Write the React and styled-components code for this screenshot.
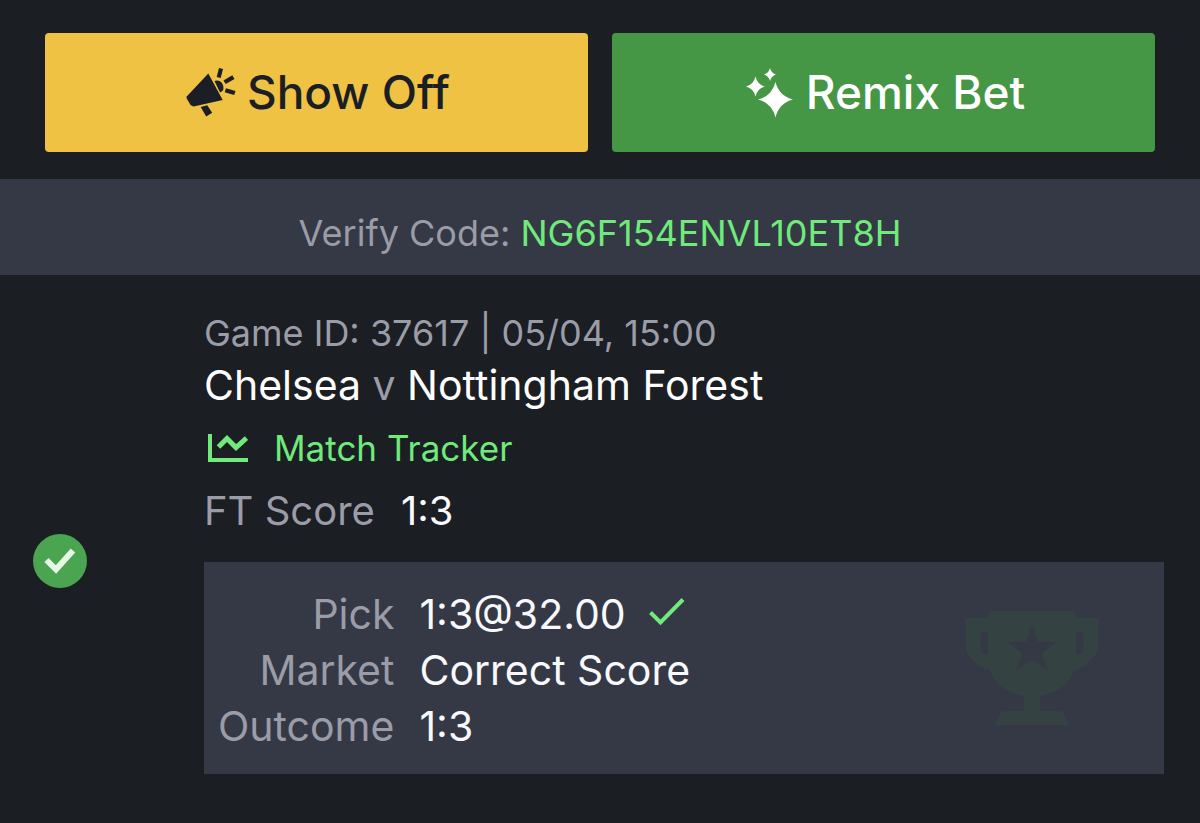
import * as React from 'react';
import styled, { createGlobalStyle } from 'styled-components';

const match = {
    gameId: '37617',
    date: '05/04, 15:00',
    home: 'Chelsea',
    away: 'Nottingham Forest',
    score: '1:3',
};

const rows = [
    { label: 'Pick', value: '1:3@32.00', won: true },
    { label: 'Market', value: 'Correct Score' },
    { label: 'Outcome', value: '1:3' },
];

export default function App() {
    return (
        <>
            <GlobalStyle />
            <main>
                <Actions>
                    <Button type="button" $bg="#efc243" $color="#1b1e24">
                        <MegaphoneIcon />
                        Show Off
                    </Button>
                    <Button type="button" $bg="#459645" $color="#fff">
                        <SparkleIcon />
                        Remix Bet
                    </Button>
                </Actions>
                <VerifyBar>
                    Verify Code: <Code>NG6F154ENVL10ET8H</Code>
                </VerifyBar>
                <Bet>
                    <Status>
                        <WonIcon />
                    </Status>
                    <Details>
                        <GameInfo>Game ID: {match.gameId} | {match.date}</GameInfo>
                        <Teams>
                            {match.home} <Muted>v</Muted> {match.away}
                        </Teams>
                        <Tracker href="#tracker">
                            <ChartIcon />
                            Match Tracker
                        </Tracker>
                        <Score>
                            <Muted>FT Score</Muted>
                            <span>{match.score}</span>
                        </Score>
                        <Panel>
                            <List>
                                {rows.map(row => (
                                    <React.Fragment key={row.label}>
                                        <Term>{row.label}</Term>
                                        <Value>
                                            {row.value}
                                            {row.won ? <TickIcon /> : null}
                                        </Value>
                                    </React.Fragment>
                                ))}
                            </List>
                            <TrophyIcon />
                        </Panel>
                    </Details>
                </Bet>
            </main>
        </>
    );
};

/* --- icons --- */

const MegaphoneIcon = () => (
    <svg width="50" height="50" viewBox="0 0 50 50" fill="currentColor" aria-hidden="true">
        <path d="M22.300 5.500 36.700 32 7.500 38.500 4.500 37 .7 30.500v-2Z" />
        <path d="M28.500 13c5-2.500 10.500 3 8.500 9.500l-3 2Z" />
        <path d="m14.700 39 6.500-1.800 5 7.500-6 3.800Z" />
        <path d="m33 0 4 1-2.300 9-4-1ZM46.300 7.300l2.200 3.700-8.800 5-2.200-3.500ZM40 20.300l9.500 2.700-1.300 4-9.500-2.700Z" />
    </svg>
);

const SparkleIcon = () => (
    <svg width="50" height="50" viewBox="0 0 50 50" fill="currentColor" aria-hidden="true">
        <path d="M30.500 14q3.500 14 17.500 17.500Q34 35 30.500 49.500 27 35 13 31.500 27 28 30.500 14Z" />
        <path d="M10.500 8.500q1.800 8 9.500 10-7.700 2-9.500 10-1.800-8-9.500-10 7.700-2 9.500-10Z" />
        <path d="M25 0q1.200 5 6 6.500-4.800 1.500-6 6.500-1.200-5-6-6.500 4.800-1.500 6-6.500Z" />
    </svg>
);

const ChartIcon = () => (
    <svg width="44" height="32" viewBox="0 0 44 32" fill="none" stroke="currentColor" aria-hidden="true">
        <path d="M6 2v26h38" strokeWidth="4" />
        <path d="m14.500 15 8.500-8.500 9 9L42.500 6" strokeWidth="5" />
    </svg>
);

const WonIcon = () => (
    <svg width="54" height="54" viewBox="0 0 54 54" role="img" aria-label="Won">
        <circle cx="27" cy="27" r="27" fill="#4ba450" />
        <path d="m13.500 26 9.500 9.500L40 16.500" fill="none" stroke="#e6f8e6" strokeWidth="6" />
    </svg>
);

const TickIcon = () => (
    <svg width="36" height="34" viewBox="0 0 36 34" fill="none" stroke="#6fea7b" strokeWidth="4" role="img" aria-label="Won">
        <path d="m1.500 15.500 10 10L34 2.500" />
    </svg>
);

const TrophyIcon = () => (
    <Trophy viewBox="0 0 132 118" aria-hidden="true">
        <path
            fillRule="evenodd"
            d="M23 0h86v7h23v30c0 4-2 6-5 9l-8 8c-4 3-7 4-11 4-4 15-15 23-34 27v15h22l7 14H29l7-14h22V85C39 81 28 73 24 58c-4 0-8-1-12-4l-8-8c-3-3-4-5-4-9V7h23ZM16 21c-2 5-2 17 0 22h6V21ZM110 21v22h6c2-5 2-17 0-22ZM66 14l-6 17H41l15 11-6 18 16-11 16 11-6-18 15-11H72Z"
        />
    </Trophy>
);

/* --- layout --- */

const GlobalStyle = createGlobalStyle`
    body {
        margin: 0;
        background: #1b1e23;
        color: #f8f9fd;
        font-family: Inter, "Liberation Sans", sans-serif;
        font-size: 41px;
        line-height: 52px;
    }
`;

const Actions = styled.div`
    display: grid;
    grid-template-columns: 1fr 1fr;
    gap: 24px;
    padding: 33px 45px 27px;
`;

const Button = styled.button`
    display: flex;
    align-items: center;
    justify-content: center;
    gap: 11px;
    padding: 30px 27px 30px 30px;
    border: none;
    border-radius: 4px;
    background: ${props => props.$bg};
    color: ${props => props.$color};
    font-family: inherit;
    font-size: 46px;
    font-weight: 500;
    line-height: 59px;
    cursor: pointer;
`;

const VerifyBar = styled.div`
    padding: 28px 24px 16px;
    background: #353945;
    color: #9a9ca8;
    font-size: 36px;
    text-align: center;
`;

const Code = styled.span`
    color: #6fea7b;
`;

const Bet = styled.section`
    display: flex;
    padding: 32px 36px 8px 33px;
`;

const Status = styled.div`
    display: flex;
    flex: 0 0 171px;
    align-items: center;
`;

const Details = styled.div`
    flex: 1;
    min-width: 0;
    padding-bottom: 41px;
`;

const GameInfo = styled.div`
    color: #9a9ca8;
    font-size: 36px;
`;

const Teams = styled.div`
    color: #fff;
`;

const Muted = styled.span`
    color: #9a9ca8;
`;

const Tracker = styled.a`
    display: flex;
    align-items: center;
    gap: 26px;
    margin-top: 11px;
    color: #6fea7b;
    font-size: 35px;
    text-decoration: none;
`;

const Score = styled.div`
    display: flex;
    gap: 26px;
    margin-top: 11px;
    font-size: 40px;
`;

const Panel = styled.div`
    display: flex;
    align-items: center;
    justify-content: space-between;
    margin-top: 25px;
    padding: 24px 66px 20px 14px;
    background: #353945;
`;

const List = styled.dl`
    display: grid;
    grid-template-columns: auto auto;
    column-gap: 25px;
    margin: 0;
    line-height: 56px;
`;

const Term = styled.dt`
    color: #9a9ca8;
    text-align: right;
`;

const Value = styled.dd`
    display: flex;
    align-items: center;
    gap: 23px;
    margin: 0;
`;

const Trophy = styled.svg`
    width: 132px;
    height: 118px;
    fill: #344341;
`;
